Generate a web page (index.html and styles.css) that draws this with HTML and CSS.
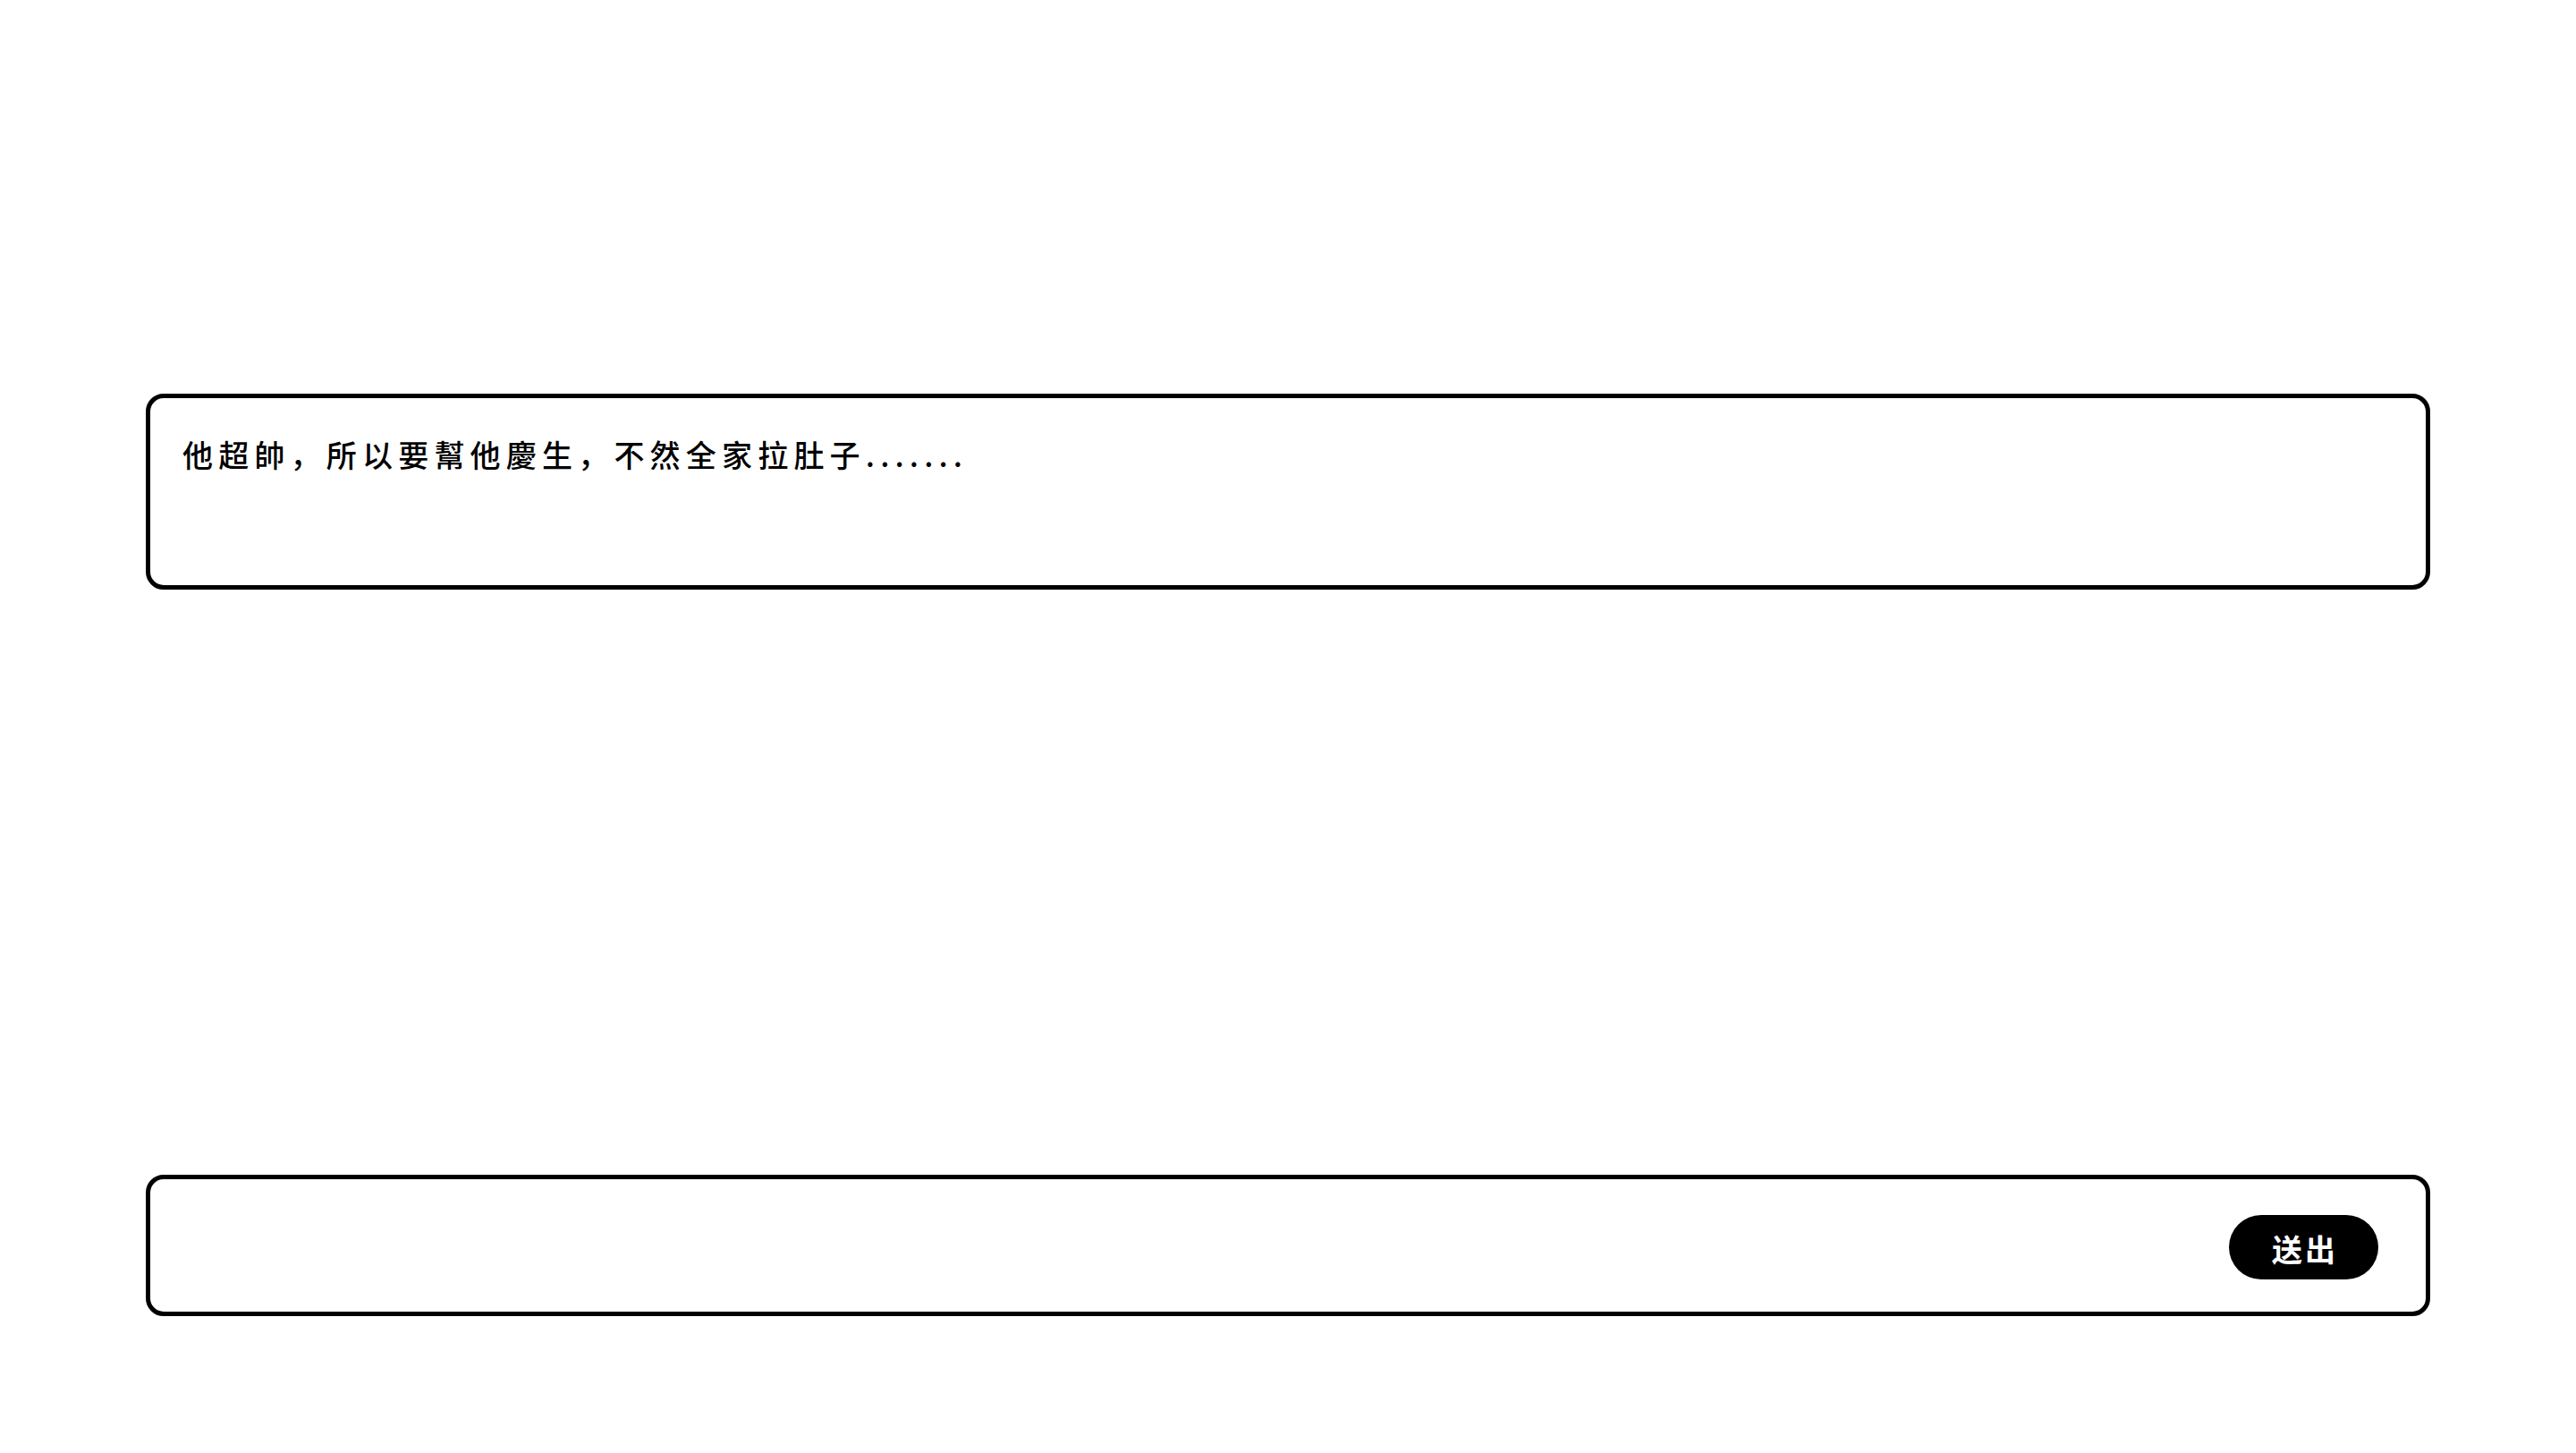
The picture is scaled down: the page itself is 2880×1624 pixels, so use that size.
FILE: index.html
```html
<!DOCTYPE html>
<html lang="zh-Hant">
<head>
<meta charset="utf-8">
<title>Chat</title>
<link rel="stylesheet" href="styles.css">
</head>
<body>
<main class="page">
  <div class="message-box">
    <p class="message-text">他超帥，所以要幫他慶生，不然全家拉肚子.......</p>
  </div>
  <form class="input-box">
    <input class="input-field" type="text" aria-label="message">
    <button class="send-btn" type="button">送出</button>
  </form>
</main>
</body>
</html>
```
FILE: styles.css
```css
html, body {
  margin: 0;
  padding: 0;
  background: #fff;
}
body {
  font-family: "Noto Sans CJK SC", "Noto Sans", sans-serif;
  font-feature-settings: "locl" 0;
  color: #000;
}
.page {
  box-sizing: border-box;
  width: 2880px;
  height: 1624px;
  padding: 440px 163px 0;
  display: flex;
  flex-direction: column;
  gap: 654px;
}
.message-box {
  box-sizing: border-box;
  height: 219px;
  border: 5px solid #000;
  border-radius: 20px;
  padding: 38px 36px;
}
.message-text {
  margin: 0;
  font-size: 34px;
  font-weight: 500;
  line-height: 49px;
  letter-spacing: 6.2px;
}
.input-box {
  box-sizing: border-box;
  height: 158px;
  border: 5px solid #000;
  border-radius: 20px;
  padding: 0 53px 0 36px;
  display: flex;
  align-items: center;
  margin: 0;
}
.input-field {
  flex: 1;
  border: none;
  outline: none;
  background: transparent;
  font-family: inherit;
  font-size: 33px;
  height: 60px;
  padding: 0;
}
.send-btn {
  width: 167px;
  height: 72px;
  margin-top: 3px;
  border: none;
  border-radius: 36px;
  background: #000;
  color: #fff;
  font-family: "Noto Sans CJK SC", sans-serif;
  font-feature-settings: "locl" 0;
  font-size: 34px;
  font-weight: 700;
  letter-spacing: 3px;
  padding: 4px 0 0 3px;
  cursor: pointer;
}
```
